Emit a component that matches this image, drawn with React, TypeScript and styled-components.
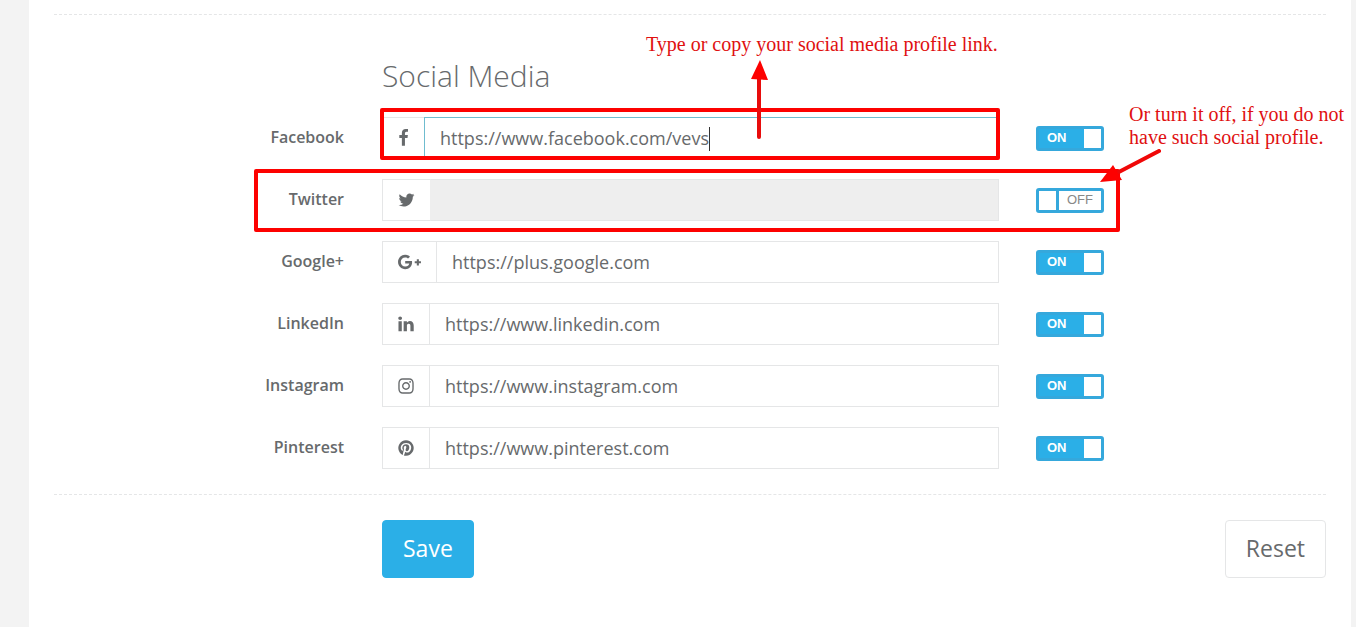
import React from "react";
import styled, { createGlobalStyle, css } from "styled-components";

const blue = "#2bafe7";
const blueEdge = "#35a8dc";
const red = "#fd0100";
const grey = "#676a6c";
const line = "#e5e6e7";

const GlobalStyle = createGlobalStyle`
  *, *::before, *::after { box-sizing: border-box; }
  body {
    margin: 0;
    background: #f3f3f3;
    color: ${grey};
    font-family: "Open Sans", "Noto Sans", sans-serif;
  }
`;

const Page = styled.div`
  min-height: 100vh;
  padding: 0 5px 0 29px;
  display: flex;
`;

const Panel = styled.main`
  flex: 1;
  background: #fff;
  padding: 14px 25px 49px;
`;

const Divider = styled.hr`
  margin: 0;
  border: 0;
  border-top: 1px dashed ${line};
`;

const columns = css`
  display: grid;
  grid-template-columns: 291fr 617fr 290fr;
  column-gap: 37px;
`;

const Form = styled.form`
  display: flex;
  flex-direction: column;
`;

const Fields = styled.section`
  display: flex;
  flex-direction: column;
  gap: 20px;
  padding: 39px 0 25px;
`;

const TitleRow = styled.div`
  ${columns}
`;

const Title = styled.h2`
  grid-column: 2;
  margin: 0;
  font-size: 30px;
  line-height: 43px;
  font-weight: 300;
`;

const Row = styled.div`
  ${columns}
  align-items: start;
`;

const RowLabel = styled.label`
  text-align: right;
  padding-right: 1px;
  font-size: 16px;
  line-height: 40px;
  font-weight: 600;
`;

const Field = styled.div`
  position: relative;
  display: flex;
  height: 42px;
`;

const Addon = styled.span`
  display: flex;
  align-items: center;
  padding: 0 15px;
  border: 1px solid ${line};
  border-right: 0;
`;

const TextBox = styled.input<{ $focused?: boolean }>`
  flex: 1;
  min-width: 0;
  padding: 0 15px;
  border: 1px solid ${(p) => (p.$focused ? "#6fbccf" : line)};
  border-radius: 0;
  outline: 0;
  background: #fff;
  color: ${grey};
  font: 400 18px "Open Sans", "Noto Sans", sans-serif;

  &:disabled {
    background: #eee;
    border-left-color: #eee;
  }
`;

const Caret = styled.span`
  position: absolute;
  left: 327px;
  top: 10px;
  width: 1px;
  height: 24px;
  background: #333;
`;

const SwitchCell = styled.div`
  position: relative;
  padding-top: 9px;
`;

const Switch = styled.label`
  position: relative;
  display: flex;
  width: 68px;
  height: 25px;
  border: 3px solid ${blueEdge};
  border-radius: 3px;
  overflow: hidden;
  cursor: pointer;
`;

const SwitchInput = styled.input`
  position: absolute;
  inset: 0;
  margin: 0;
  opacity: 0;
`;

const SwitchText = styled.span<{ $on: boolean }>`
  flex: 1;
  padding-left: 8px;
  background: ${(p) => (p.$on ? blue : "#fff")};
  color: ${(p) => (p.$on ? "#fff" : "#888")};
  font-family: "Liberation Sans", Arial, sans-serif;
  font-size: 13px;
  line-height: 18px;
  font-weight: ${(p) => (p.$on ? 700 : 400)};
`;

const Knob = styled.span<{ $on: boolean }>`
  box-sizing: content-box;
  width: 17px;
  background: #fff;
  order: ${(p) => (p.$on ? 1 : -1)};
  border-right: ${(p) => (p.$on ? "0" : `3px solid ${blueEdge}`)};
`;

const Actions = styled.div`
  ${columns}
  padding-top: 25px;
`;

const Button = styled.button<{ $primary?: boolean }>`
  height: 58px;
  padding: 0 20px 2px;
  border: 1px solid ${(p) => (p.$primary ? blue : line)};
  border-radius: 4px;
  background: ${(p) => (p.$primary ? blue : "#fff")};
  color: ${(p) => (p.$primary ? "#fff" : grey)};
  font: 400 23px "Open Sans", "Noto Sans", sans-serif;
  grid-column: ${(p) => (p.$primary ? 2 : 3)};
  justify-self: ${(p) => (p.$primary ? "start" : "end")};
  cursor: pointer;
`;

const Highlight = styled.span<{ $inset: string }>`
  position: absolute;
  inset: ${(p) => p.$inset};
  border: 4px solid ${red};
  border-radius: 2px;
  pointer-events: none;
`;

const Note = styled.p<{ $left: number; $top: number }>`
  position: absolute;
  left: ${(p) => p.$left}px;
  top: ${(p) => p.$top}px;
  margin: 0;
  white-space: nowrap;
  color: #e01010;
  font: 400 20px/23px "Liberation Serif", "Times New Roman", serif;
`;

const Arrow = styled.svg<{ $left: number; $top: number }>`
  position: absolute;
  left: ${(p) => p.$left}px;
  top: ${(p) => p.$top}px;
  z-index: 1;
  pointer-events: none;
`;

type Glyph = { width: number; box: string; path: string };

const glyphs: Record<string, Glyph> = {
  facebook: {
    width: 11,
    box: "384 0 1024 1792",
    path: "M1343 12v264h-157q-86 0-116 36t-30 108v189h293l-39 296h-254v759h-306v-759h-255v-296h255v-218q0-186 104-288.5t277-102.5q147 0 228 12z",
  },
  twitter: {
    width: 17,
    box: "64 0 1664 1792",
    path: "M1684 408q-67 98-162 167 1 14 1 42 0 130-38 259.5t-115.5 248.5-184.5 210.5-258 146-323 54.5q-271 0-496-145 35 4 78 4 225 0 401-138-105-2-188-64.5t-114-159.5q33 5 61 5 43 0 85-11-112-23-185.5-111.5t-73.5-205.5v-4q68 38 146 41-66-44-105-115t-39-154q0-88 44-163 121 149 294.5 238.5t371.5 99.5q-8-38-8-74 0-134 94.5-228.5t228.5-94.5q140 0 236 102 109-21 205-78-37 115-142 178 93-10 186-50z",
  },
  google: {
    width: 23,
    box: "12 15 616 482",
    path: "M386.061 228.496c1.834 9.692 3.143 19.384 3.143 31.956C389.204 370.205 315.599 448 204.8 448c-106.084 0-192-85.915-192-192s85.916-192 192-192c51.864 0 95.083 18.859 128.611 50.292l-52.126 50.03c-14.145-13.621-39.028-29.599-76.485-29.599-65.484 0-118.92 54.221-118.92 121.277 0 67.056 53.436 121.277 118.92 121.277 75.961 0 104.513-54.745 108.965-82.773H204.8v-66.009h181.261zm185.406 6.437V179.2h-56.001v55.733h-55.733v56.001h55.733v55.733h56.001v-55.733H627.2v-56.001h-55.733z",
  },
  linkedin: {
    width: 16,
    box: "128 0 1536 1792",
    path: "M477 625v991h-330v-991h330zm21-306q1 73-50.5 122t-135.5 49h-2q-82 0-132-49t-50-122q0-74 51.5-122.5t134.5-48.5 133 48.5 51 122.5zm1166 729v568h-329v-530q0-105-40.5-164.5t-126.5-59.5q-63 0-105.5 34.5t-63.5 85.5q-11 30-11 81v553h-329q2-399 2-647t-1-296l-1-48h329v144h-2q20-32 41-56t56.5-52 87-43.5 114.5-15.5q171 0 275 113.5t104 332.5z",
  },
  instagram: {
    width: 16,
    box: "128 0 1536 1792",
    path: "M1152 896q0-106-75-181t-181-75-181 75-75 181 75 181 181 75 181-75 75-181zm138 0q0 164-115 279t-279 115-279-115-115-279 115-279 279-115 279 115 115 279zm108-410q0 38-27 65t-65 27-65-27-27-65 27-65 65-27 65 27 27 65zm-502-220q-7 0-76.5-.5t-105.5 0-96.5 3-103 10-71.5 18.5q-50 20-88 58t-58 88q-11 29-18.5 71.5t-10 103-3 96.5 0 105.5.5 76.5-.5 76.5 0 105.5 3 96.5 10 103 18.5 71.5q20 50 58 88t88 58q29 11 71.5 18.5t103 10 96.5 3 105.5 0 76.5-.5 76.5.5 105.5 0 96.5-3 103-10 71.5-18.5q50-20 88-58t58-88q11-29 18.5-71.5t10-103 3-96.5 0-105.5-.5-76.5.5-76.5 0-105.5-3-96.5-10-103-18.5-71.5q-20-50-58-88t-88-58q-29-11-71.5-18.5t-103-10-96.5-3-105.5 0-76.5.5zm768 630q0 229-5 317-10 208-124 322t-322 124q-88 5-317 5t-317-5q-208-10-322-124t-124-322q-5-88-5-317t5-317q10-208 124-322t322-124q88-5 317-5t317 5q208 10 322 124t124 322q5 88 5 317z",
  },
  pinterest: {
    width: 16,
    box: "128 0 1536 1792",
    path: "M1664 896q0 209-103 385.5t-279.5 279.5-385.5 103q-111 0-218-32 59-93 78-164 9-34 54-211 20 39 73 67.5t114 28.5q121 0 216-68.5t147-188.5 52-270q0-114-59.5-214t-172.5-163-255-63q-105 0-196 29t-154.5 77-109 110.5-67 129.5-21.5 134q0 104 40 183t117 111q30 12 38-20 2-7 8-31t8-30q6-23-11-43-51-61-51-151 0-151 104.5-259.5t273.5-108.5q151 0 235.5 82t84.5 213q0 170-68.5 289t-175.5 119q-61 0-98-43.5t-23-104.5q8-35 26.5-93.5t30-103 11.5-75.5q0-50-27-83t-77-33q-62 0-105 57t-43 142q0 73 25 122l-99 418q-17 70-13 177-206-91-333-281t-127-423q0-209 103-385.5t279.5-279.5 385.5-103 385.5 103 279.5 279.5 103 385.5z",
  },
};

const networks = [
  { id: "facebook", name: "Facebook", url: "https://www.facebook.com/vevs", on: true },
  { id: "twitter", name: "Twitter", url: "", on: false },
  { id: "google", name: "Google+", url: "https://plus.google.com", on: true },
  { id: "linkedin", name: "LinkedIn", url: "https://www.linkedin.com", on: true },
  { id: "instagram", name: "Instagram", url: "https://www.instagram.com", on: true },
  { id: "pinterest", name: "Pinterest", url: "https://www.pinterest.com", on: true },
];

function BrandIcon({ id }: { id: string }) {
  const g = glyphs[id];
  return (
    <svg width={g.width} height={18} viewBox={g.box} fill="currentColor" aria-hidden="true">
      <path d={g.path} />
    </svg>
  );
}

function NetworkRow({ id, name, url, on }: (typeof networks)[number]) {
  const [enabled, setEnabled] = React.useState(on);
  const first = id === "facebook";
  return (
    <Row>
      <RowLabel htmlFor={id}>{name}</RowLabel>
      <Field>
        <Addon>
          <BrandIcon id={id} />
        </Addon>
        <TextBox id={id} type="text" defaultValue={url} disabled={!enabled} $focused={first} />
        {first && (
          <>
            <Caret />
            <Highlight $inset="-9px -1px -1px -2px" />
            <Note $left={264} $top={-84}>
              Type or copy your social media profile link.
            </Note>
            <Arrow $left={368} $top={-57} width="20" height="82" viewBox="0 0 20 82" aria-hidden="true">
              <path d="M9 18V77" stroke="#e80c0c" strokeWidth="4" strokeLinecap="round" />
              <path d="M10 0L18 20L1 19Z" fill={red} />
            </Arrow>
          </>
        )}
        {id === "twitter" && <Highlight $inset="-10px -121px -11px -128px" />}
      </Field>
      <SwitchCell>
        <Switch>
          <SwitchInput
            type="checkbox"
            aria-label={name}
            checked={enabled}
            onChange={(e) => setEnabled(e.target.checked)}
          />
          <SwitchText $on={enabled}>{enabled ? "ON" : "OFF"}</SwitchText>
          <Knob $on={enabled} />
        </Switch>
        {first && (
          <>
            <Note $left={93} $top={-14}>
              Or turn it off, if you do not
              <br />
              have such social profile.
            </Note>
            <Arrow $left={63} $top={32} width="64" height="36" viewBox="0 0 64 36" aria-hidden="true">
              <path d="M60 2L16 25" stroke="#f00808" strokeWidth="4" strokeLinecap="round" />
              <path d="M1 33L14 16L23 31Z" fill={red} />
            </Arrow>
          </>
        )}
      </SwitchCell>
    </Row>
  );
}

export default function App() {
  return (
    <>
      <GlobalStyle />
      <Page>
        <Panel>
          <Form onSubmit={(e) => e.preventDefault()}>
            <Divider />
            <Fields>
              <TitleRow>
                <Title>Social Media</Title>
              </TitleRow>
              {networks.map((n) => (
                <NetworkRow key={n.id} {...n} />
              ))}
            </Fields>
            <Divider />
            <Actions>
              <Button type="submit" $primary>
                Save
              </Button>
              <Button type="reset">Reset</Button>
            </Actions>
          </Form>
        </Panel>
      </Page>
    </>
  );
}
